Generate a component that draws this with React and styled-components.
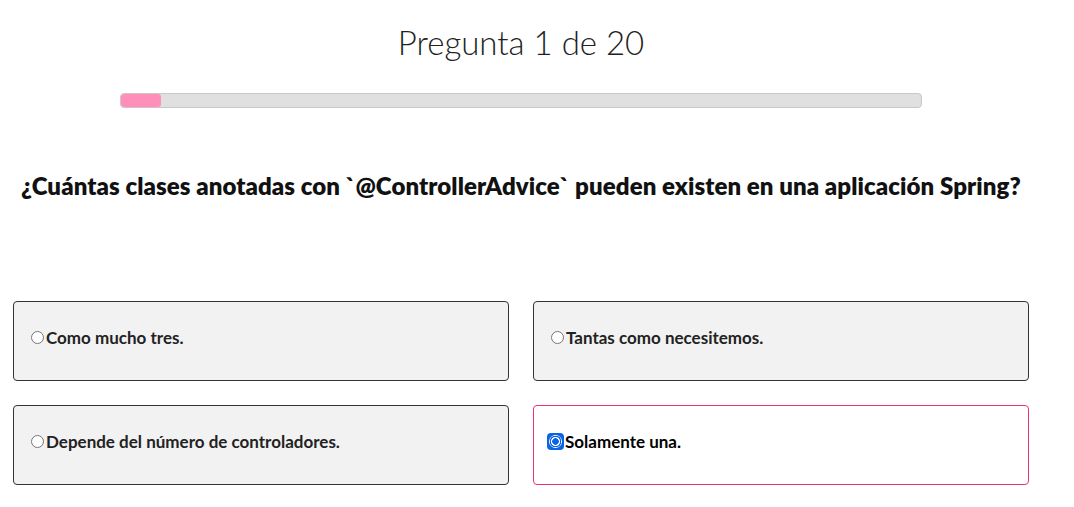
import React, { useState } from "react";
import styled, { createGlobalStyle } from "styled-components";

const GlobalStyle = createGlobalStyle`
  html, body {
    margin: 0;
    padding: 0;
    background: #ffffff;
    font-family: Lato, "Noto Sans", sans-serif;
    color: #222;
  }
`;

const Page = styled.div`
  width: 1016px;
  margin-left: 13px;
  display: flex;
  flex-direction: column;
  align-items: center;
`;

const Title = styled.h1`
  margin: 22px 0 0;
  font-size: 33px;
  font-weight: 300;
  line-height: 40px;
  color: #222;
`;

const Progress = styled.div`
  margin-top: 31px;
  width: 802px;
  height: 15px;
  box-sizing: border-box;
  background: #e0e0e0;
  border: 1px solid #c8c8c8;
  border-radius: 4px;
  overflow: hidden;
`;

const ProgressFill = styled.div`
  height: 100%;
  background: #ff8fb9;
  border-radius: 3px;
`;

const Question = styled.h2`
  align-self: stretch;
  margin: 63px 0 0;
  padding-left: 8px;
  font-size: 24px;
  font-weight: 800;
  line-height: 30px;
  letter-spacing: 0.08px;
  color: #111;
`;

const Options = styled.div`
  align-self: stretch;
  margin-top: 100px;
  display: grid;
  grid-template-columns: 496px 496px;
  column-gap: 24px;
  row-gap: 24px;
`;

const Option = styled.label`
  box-sizing: border-box;
  height: 80px;
  display: flex;
  align-items: center;
  padding: 0 0 8px ${(p) => (p.selected ? "13px" : "17px")};
  border: 1px solid ${(p) => (p.selected ? "#ef2f75" : "#333")};
  border-radius: 4px;
  background: ${(p) => (p.selected ? "#ffffff" : "#f2f2f2")};
  font-size: 17px;
  font-weight: 700;
  color: ${(p) => (p.selected ? "#000" : "#222")};
  cursor: pointer;
`;

const FocusRing = styled.span`
  display: inline-flex;
  padding: ${(p) => (p.active ? "2px" : "0")};
  border-radius: 4px;
  background: ${(p) => (p.active ? "#0b63e5" : "transparent")};
  margin-right: ${(p) => (p.active ? "1px" : "2px")};
`;

const Radio = styled.input`
  appearance: none;
  margin: 0;
  width: 13px;
  height: 13px;
  box-sizing: border-box;
  border-radius: 50%;
  border: 1px solid #767676;
  background: #fff;
  &:checked {
    border: none;
    background: radial-gradient(
      circle,
      #0b63e5 0 3px,
      #ffffff 3.6px 4.3px,
      #0b63e5 4.8px 5.6px,
      #ffffff 6px
    );
  }
`;

const answers = [
  "Como mucho tres.",
  "Tantas como necesitemos.",
  "Depende del número de controladores.",
  "Solamente una.",
];

export default function App() {
  const [selected, setSelected] = useState(3);
  const current = 1;
  const total = 20;
  return (
    <>
      <GlobalStyle />
      <Page>
        <Title>
          Pregunta {current} de {total}
        </Title>
        <Progress>
          <ProgressFill style={{ width: `${(current / total) * 100}%` }} />
        </Progress>
        <Question>
          ¿Cuántas clases anotadas con `@ControllerAdvice` pueden existen en una
          aplicación Spring?
        </Question>
        <Options>
          {answers.map((a, i) => (
            <Option key={a} selected={selected === i}>
              <FocusRing active={selected === i}>
                <Radio
                  type="radio"
                  name="answer"
                  checked={selected === i}
                  onChange={() => setSelected(i)}
                />
              </FocusRing>
              {a}
            </Option>
          ))}
        </Options>
      </Page>
    </>
  );
}
